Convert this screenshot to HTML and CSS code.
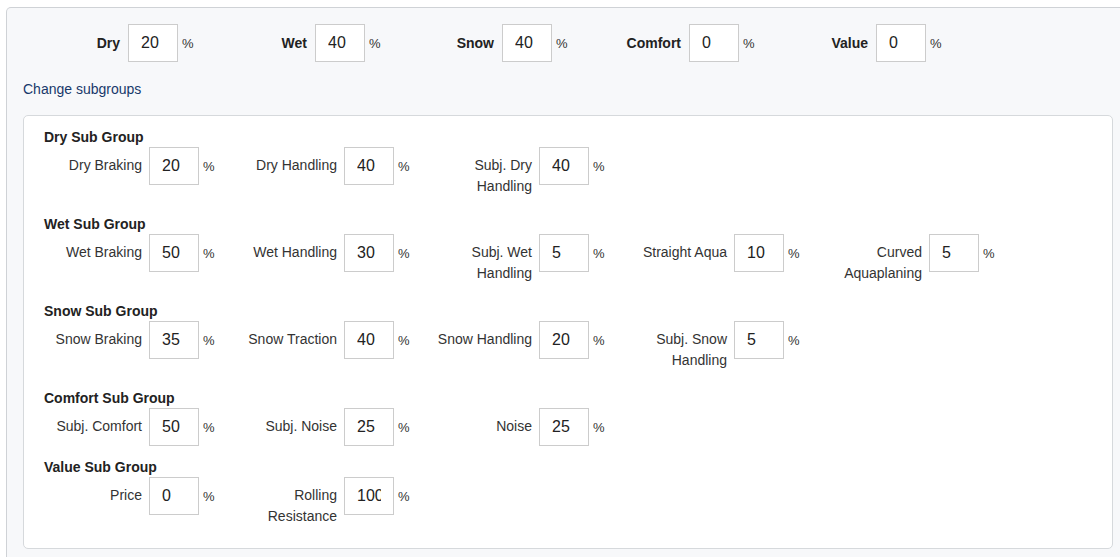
FILE: index.html
```html
<!DOCTYPE html>
<html>
<head>
<meta charset="utf-8">
<link rel="stylesheet" href="styles.css">
</head>
<body>
<div class="outer">
  <div class="top-row">
    <div class="top-field"><span class="top-label">Dry</span><input class="num" value="20"><span class="pct">%</span></div>
    <div class="top-field"><span class="top-label">Wet</span><input class="num" value="40"><span class="pct">%</span></div>
    <div class="top-field"><span class="top-label">Snow</span><input class="num" value="40"><span class="pct">%</span></div>
    <div class="top-field"><span class="top-label">Comfort</span><input class="num" value="0"><span class="pct">%</span></div>
    <div class="top-field"><span class="top-label">Value</span><input class="num" value="0"><span class="pct">%</span></div>
  </div>
  <a class="change-link" href="#">Change subgroups</a>
  <div class="inner">
    <div class="group">
      <div class="group-title">Dry Sub Group</div>
      <div class="group-row">
        <div class="field"><label class="field-label">Dry Braking</label><div class="box"><input class="num" value="20"><span class="pct">%</span></div></div>
        <div class="field"><label class="field-label">Dry Handling</label><div class="box"><input class="num" value="40"><span class="pct">%</span></div></div>
        <div class="field"><label class="field-label">Subj. Dry Handling</label><div class="box"><input class="num" value="40"><span class="pct">%</span></div></div>
      </div>
    </div>
    <div class="group">
      <div class="group-title">Wet Sub Group</div>
      <div class="group-row">
        <div class="field"><label class="field-label">Wet Braking</label><div class="box"><input class="num" value="50"><span class="pct">%</span></div></div>
        <div class="field"><label class="field-label">Wet Handling</label><div class="box"><input class="num" value="30"><span class="pct">%</span></div></div>
        <div class="field"><label class="field-label">Subj. Wet Handling</label><div class="box"><input class="num" value="5"><span class="pct">%</span></div></div>
        <div class="field"><label class="field-label">Straight Aqua</label><div class="box"><input class="num" value="10"><span class="pct">%</span></div></div>
        <div class="field"><label class="field-label">Curved Aquaplaning</label><div class="box"><input class="num" value="5"><span class="pct">%</span></div></div>
      </div>
    </div>
    <div class="group">
      <div class="group-title">Snow Sub Group</div>
      <div class="group-row">
        <div class="field"><label class="field-label">Snow Braking</label><div class="box"><input class="num" value="35"><span class="pct">%</span></div></div>
        <div class="field"><label class="field-label">Snow Traction</label><div class="box"><input class="num" value="40"><span class="pct">%</span></div></div>
        <div class="field"><label class="field-label">Snow Handling</label><div class="box"><input class="num" value="20"><span class="pct">%</span></div></div>
        <div class="field"><label class="field-label">Subj. Snow Handling</label><div class="box"><input class="num" value="5"><span class="pct">%</span></div></div>
      </div>
    </div>
    <div class="group">
      <div class="group-title">Comfort Sub Group</div>
      <div class="group-row">
        <div class="field"><label class="field-label">Subj. Comfort</label><div class="box"><input class="num" value="50"><span class="pct">%</span></div></div>
        <div class="field"><label class="field-label">Subj. Noise</label><div class="box"><input class="num" value="25"><span class="pct">%</span></div></div>
        <div class="field"><label class="field-label">Noise</label><div class="box"><input class="num" value="25"><span class="pct">%</span></div></div>
      </div>
    </div>
    <div class="group">
      <div class="group-title">Value Sub Group</div>
      <div class="group-row">
        <div class="field"><label class="field-label">Price</label><div class="box"><input class="num" value="0"><span class="pct">%</span></div></div>
        <div class="field"><label class="field-label">Rolling Resistance</label><div class="box"><input class="num" value="100"><span class="pct">%</span></div></div>
      </div>
    </div>
  </div>
</div>
</body>
</html>
```
FILE: styles.css
```css
html, body {
  margin: 0;
  padding: 0;
  overflow: hidden;
  background: #ffffff;
}
body {
  font-family: "Liberation Sans", Arial, sans-serif;
  font-size: 14px;
  color: #333333;
}
.outer {
  box-sizing: border-box;
  width: 1124px;
  margin: 7px 0 0 6px;
  padding: 16px 16px 0 16px;
  height: 551px;
  background: #f7f8fa;
  border: 1px solid #cfd2d6;
  border-bottom: none;
  border-radius: 5px 5px 0 0;
}
.top-row {
  display: flex;
  height: 38px;
  margin-bottom: 17px;
}
.top-field {
  width: 187px;
  display: flex;
  align-items: center;
}
.top-label {
  width: 97px;
  margin-right: 8px;
  text-align: right;
  font-weight: bold;
  color: #222222;
}
.num {
  box-sizing: border-box;
  width: 50px;
  height: 38px;
  margin: 0;
  padding: 0 12px;
  border: 1px solid #cccccc;
  border-radius: 0;
  background: #ffffff;
  font-family: "Liberation Sans", Arial, sans-serif;
  font-size: 16px;
  color: #222222;
  outline: none;
}
.pct {
  margin-left: 4px;
  font-size: 13px;
  color: #333333;
}
.change-link {
  display: block;
  line-height: 20px;
  margin-bottom: 16px;
  color: #17396a;
  text-decoration: none;
}
.inner {
  background: #ffffff;
  border: 1px solid #d6d9dc;
  border-radius: 5px;
  padding: 11px 20px 15px 20px;
}
.group {
  margin-bottom: 11px;
}
.group:last-child {
  margin-bottom: 0;
}
.group-title {
  font-weight: bold;
  line-height: 20px;
  color: #222222;
}
.group-row {
  display: flex;
  align-items: flex-start;
}
.field {
  width: 195px;
  display: flex;
  align-items: flex-start;
}
.field-label {
  width: 98px;
  margin-right: 7px;
  padding: 8px 0 6px 0;
  line-height: 21px;
  text-align: right;
}
.box {
  display: flex;
  align-items: center;
  height: 38px;
}
```
